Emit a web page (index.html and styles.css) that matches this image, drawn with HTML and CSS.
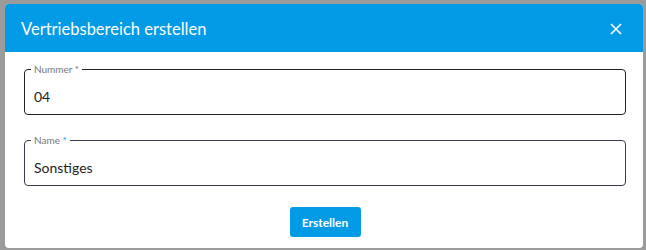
FILE: index.html
```html
<!DOCTYPE html>
<html lang="de">
<head>
  <meta charset="UTF-8">
  <meta name="viewport" content="width=device-width, initial-scale=1.0">
  <title>Vertriebsbereich erstellen</title>
  <link rel="stylesheet" href="styles.css">
</head>
<body>
  <div class="dialog">
    <div class="dialog-header">
      <span class="dialog-title">Vertriebsbereich erstellen</span>
      <button class="close-btn" aria-label="Schließen">
        <svg width="12" height="12" viewBox="0 0 12 12">
          <path d="M1 1L11 11M11 1L1 11" stroke="#fff" stroke-width="1.6" fill="none"/>
        </svg>
      </button>
    </div>
    <div class="dialog-body">
      <div class="field">
        <label class="field-label" for="nummer">Nummer *</label>
        <input type="text" id="nummer" value="04">
      </div>
      <div class="field field-name">
        <label class="field-label" for="name">Name <span class="req">*</span></label>
        <input type="text" id="name" value="Sonstiges">
      </div>
      <div class="actions">
        <button class="submit-btn">Erstellen</button>
      </div>
    </div>
  </div>
</body>
</html>
```

FILE: styles.css
```css
body {
  margin: 0;
  background: #9b9b9b;
  font-family: Lato, "Noto Sans", sans-serif;
}

.dialog {
  margin: 4px 3px 0 5px;
  height: 244px;
  background: #fff;
  border-radius: 4px;
  overflow: hidden;
}

.dialog-header {
  display: flex;
  align-items: center;
  justify-content: space-between;
  height: 48px;
  padding: 0 21px 0 16px;
  background: #039be5;
  color: #fff;
}

.dialog-title {
  font-size: 16.5px;
  margin-top: 1px;
}

.close-btn {
  display: flex;
  padding: 0;
  margin-top: 2px;
  border: none;
  background: none;
  cursor: pointer;
}

.dialog-body {
  display: flex;
  flex-direction: column;
  padding: 17px 17px 0 19px;
}

.field {
  position: relative;
  height: 44px;
  border: 1px solid #222;
  border-radius: 4px;
}

.field-name {
  margin-top: 25px;
  border-color: #3a3d4a;
}

.field-label {
  position: absolute;
  top: -6px;
  left: 6px;
  padding: 0 3px;
  background: #fff;
  font-size: 10px;
  line-height: 11px;
  color: #777;
}

.req {
  color: #039be5;
}

.field input {
  width: 100%;
  box-sizing: border-box;
  height: 100%;
  padding: 8px 9px 0;
  border: none;
  outline: none;
  background: transparent;
  font-family: inherit;
  font-size: 14px;
  color: #222;
}

.actions {
  display: flex;
  justify-content: center;
  margin-top: 21px;
}

.submit-btn {
  width: 71px;
  height: 30px;
  border: none;
  border-radius: 3px;
  background: #039be5;
  color: #fff;
  font-family: inherit;
  font-size: 12px;
  font-weight: bold;
  cursor: pointer;
}
```
